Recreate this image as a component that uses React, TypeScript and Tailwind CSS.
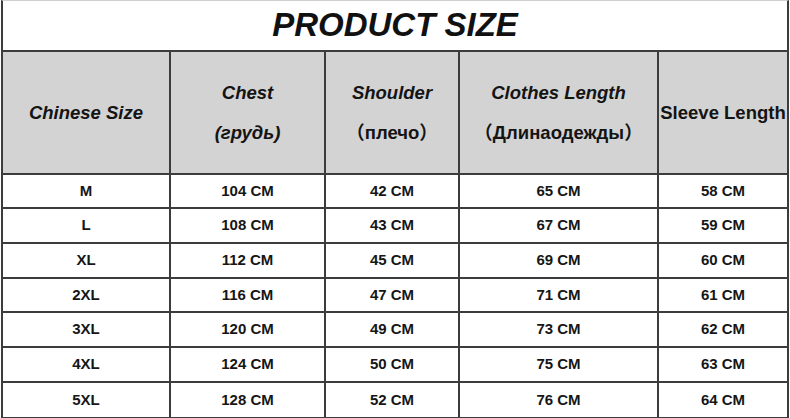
const rows = [
  ['M', '104 CM', '42 CM', '65 CM', '58 CM'],
  ['L', '108 CM', '43 CM', '67 CM', '59 CM'],
  ['XL', '112 CM', '45 CM', '69 CM', '60 CM'],
  ['2XL', '116 CM', '47 CM', '71 CM', '61 CM'],
  ['3XL', '120 CM', '49 CM', '73 CM', '62 CM'],
  ['4XL', '124 CM', '50 CM', '75 CM', '63 CM'],
  ['5XL', '128 CM', '52 CM', '76 CM', '64 CM'],
]

// 行高略有差异，对齐原图的分隔线
const rowHeights = ['h-[34px]', 'h-[35px]', 'h-[35px]', 'h-[34px]', 'h-[35px]', 'h-[35px]', 'h-[34px]']

const font = "font-['Liberation_Sans','Noto_Sans_CJK_SC',sans-serif]"

function HeadCell({ children, last }: { children: React.ReactNode; last?: boolean }) {
  return (
    <div
      className={`flex h-[123px] flex-col items-center justify-center border-b-2 border-[#3c3c3c] bg-[#d3d3d3] text-[18.5px] font-bold text-[#141414] ${
        last ? '' : 'border-r-2'
      }`}
    >
      {children}
    </div>
  )
}

export default function App() {
  return (
    <div className={`h-[418px] w-[790px] overflow-hidden bg-white ${font}`}>
      <div className="ml-[1px] w-[788px] border-x-2 border-b-2 border-t border-x-[#3c3c3c] border-b-[#3c3c3c] border-t-[#cfcfcf]">
        {/* 标题 */}
        <div className="flex h-[51px] items-center justify-center border-b-2 border-[#3c3c3c] pb-[2px]">
          <h1 className="text-[33px] font-bold italic leading-none text-[#111]">PRODUCT SIZE</h1>
        </div>

        <div className="grid grid-cols-[168px_155px_134px_199px_128px]">
          {/* 表头 */}
          <HeadCell>
            <span className="italic">Chinese Size</span>
          </HeadCell>
          <HeadCell>
            <span className="leading-[40px] italic">Chest</span>
            <span className="leading-[40px] italic">(грудь)</span>
          </HeadCell>
          <HeadCell>
            <span className="leading-[40px] italic">Shoulder</span>
            <span className="leading-[40px]">（плечо）</span>
          </HeadCell>
          <HeadCell>
            <span className="leading-[40px] italic">Clothes Length</span>
            <span className="leading-[40px]">（Длинаодежды）</span>
          </HeadCell>
          <HeadCell last>
            <span className="whitespace-nowrap">Sleeve Length</span>
          </HeadCell>

          {/* 数据 */}
          {rows.map((row, i) =>
            row.map((cell, j) => (
              <div
                key={`${i}-${j}`}
                className={`flex items-center justify-center border-[#3c3c3c] text-[15px] font-bold text-[#161616] ${
                  rowHeights[i]
                } ${i < rows.length - 1 ? 'border-b-2' : ''} ${j < row.length - 1 ? 'border-r-2' : ''}`}
              >
                {cell}
              </div>
            ))
          )}
        </div>
      </div>
    </div>
  )
}
